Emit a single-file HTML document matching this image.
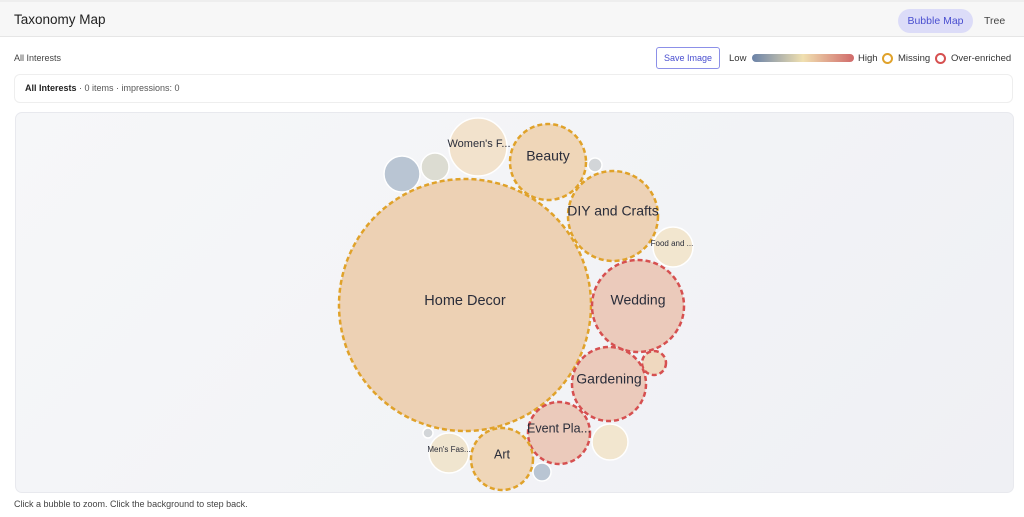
<!DOCTYPE html>
<html><head><meta charset="utf-8"><style>
*{box-sizing:border-box;margin:0;padding:0}
body{width:1024px;height:517px;background:#fff;font-family:"Liberation Sans",sans-serif;color:#222;position:relative;overflow:hidden}
.top{position:absolute;left:0;top:0;width:1024px;height:37px;background:#f7f7f7;border-bottom:1px solid #e6e6e6;border-top:2px solid #eee}
.title{position:absolute;left:14px;top:10px;font-size:13.5px;color:#222}
.bm{position:absolute;left:898px;top:7px;width:75px;height:24px;border-radius:12px;background:#dcdcf8;color:#4a4fd0;font-size:10.5px;text-align:center;line-height:24px}
.tree{position:absolute;left:984px;top:13px;font-size:10.5px;color:#444}
.ai{position:absolute;left:14px;top:53px;font-size:9px;color:#444}
.save{position:absolute;left:656px;top:47px;width:64px;height:22px;border:1px solid #8c90e8;border-radius:3px;color:#4a4fd0;font-size:9px;text-align:center;line-height:20px}
.leg{position:absolute;top:53px;font-size:9.5px;color:#333}
.grad{position:absolute;left:752px;top:54px;width:102px;height:8px;border-radius:4px;background:linear-gradient(90deg,#6a82a8,#f0e0b0,#d06a6a)}
.ring{position:absolute;top:53px;width:11px;height:11px;border-radius:50%;border:2px solid}
.crumb{position:absolute;left:14px;top:74px;width:999px;height:29px;border:1px solid #eee;border-radius:6px;font-size:9px;color:#555;padding:8px 0 0 10px}
.panel{position:absolute;left:15px;top:112px;width:999px;height:381px;border:1px solid #e8e9ee;border-radius:7px;background:linear-gradient(135deg,#f6f7f9,#eff0f4)}
.foot{position:absolute;left:14px;top:499px;font-size:9px;color:#444}
svg{position:absolute;left:0;top:0}
text{font-family:"Liberation Sans",sans-serif;fill:#2a2d3a;text-anchor:middle;dominant-baseline:middle}
</style></head><body>
<div class="top"><div class="title">Taxonomy Map</div><div class="bm">Bubble Map</div><div class="tree">Tree</div></div>
<div class="ai">All Interests</div>
<div class="save">Save Image</div>
<div class="leg" style="left:729px">Low</div>
<div class="grad"></div>
<div class="leg" style="left:858px">High</div>
<div class="ring" style="left:882px;border-color:#e0a22a"></div>
<div class="leg" style="left:898px">Missing</div>
<div class="ring" style="left:935px;border-color:#d65050"></div>
<div class="leg" style="left:951px">Over-enriched</div>
<div class="crumb"><b style="color:#222">All Interests</b> · 0 items · impressions: 0</div>
<div class="panel"></div>
<svg width="1024" height="517">
<g stroke="#fff" stroke-width="1.5">
<circle cx="402" cy="174" r="18" fill="#b9c5d3"/>
<circle cx="435" cy="167" r="14" fill="#dcdcd2"/>
<circle cx="478" cy="147" r="29" fill="#f2e2cc"/>
<circle cx="595" cy="165" r="7" fill="#d2d5d8"/>
<circle cx="673" cy="247" r="20" fill="#f2e6cf"/>
<circle cx="610" cy="442" r="18" fill="#f2e6cf"/>
<circle cx="449" cy="453" r="20" fill="#f0e5cf"/>
<circle cx="428" cy="433" r="5" fill="#d2d5d8"/>
<circle cx="542" cy="472" r="9" fill="#b9c5d3"/>
</g>
<g stroke-width="2.5" stroke-dasharray="5 3">
<circle cx="465" cy="305" r="126" fill="#edd1b4" stroke="#e0a22a"/>
<circle cx="548" cy="162" r="38" fill="#efd6b8" stroke="#e0a22a"/>
<circle cx="613" cy="216" r="45" fill="#edd2b6" stroke="#e0a22a"/>
<circle cx="638" cy="306" r="46" fill="#ebcabb" stroke="#d65050"/>
<circle cx="654" cy="363" r="12" fill="#efd8bf" stroke="#d65050"/>
<circle cx="609" cy="384" r="37" fill="#ebcabb" stroke="#d65050"/>
<circle cx="559" cy="433" r="31" fill="#ebcabb" stroke="#d65050"/>
<circle cx="502" cy="459" r="31" fill="#efd6b8" stroke="#e0a22a"/>
</g>
<text x="465" y="301" font-size="14.5">Home Decor</text>
<text x="548" y="157" font-size="14">Beauty</text>
<text x="479" y="144" font-size="11">Women's F...</text>
<text x="613" y="212" font-size="14">DIY and Crafts</text>
<text x="672" y="244" font-size="8">Food and ...</text>
<text x="638" y="301" font-size="14">Wedding</text>
<text x="609" y="380" font-size="14">Gardening</text>
<text x="559" y="429" font-size="12.5">Event Pla...</text>
<text x="502" y="455" font-size="12.5">Art</text>
<text x="449" y="450" font-size="8">Men's Fas...</text>
</svg>
<div class="foot">Click a bubble to zoom. Click the background to step back.</div>
</body></html>
